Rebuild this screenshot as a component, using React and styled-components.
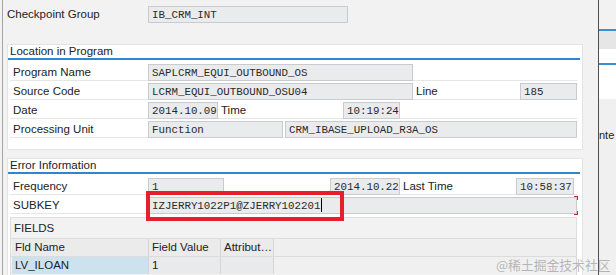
import React from 'react';
import styled, { createGlobalStyle } from 'styled-components';

// global page reset
const GlobalStyle = createGlobalStyle`
  html, body {
    margin: 0;
    padding: 0;
    background: #f2f2f2;
  }
  body {
    font-family: "Liberation Sans", Arial, sans-serif;
    font-size: 11.5px;
    color: #222;
  }
`;

const Screen = styled.div`
  position: relative;
  display: flex;
  width: 616px;
  height: 275px;
  overflow: hidden;
`;

const Main = styled.div`
  width: 598px;
  padding: 6px 0 0 7px;
  box-sizing: border-box;
  background: linear-gradient(to right, #f2f2f2 2px, #a4a4a4 2px, #a4a4a4 3px, #f2f2f2 3px);
`;

const Divider = styled.div`
  width: 1px;
  background: #4f4f4f;
`;

const Side = styled.div`
  flex: 1;
  display: flex;
  flex-direction: column;
  overflow: hidden;
  background: #f2f2f2;
`;

const SideBand = styled.div`
  height: ${p => p.h}px;
  background: ${p => p.bg};
  border-top: ${p => (p.blue ? '2px solid #3b8fd3' : 'none')};
`;

const SideText = styled.div`
  flex: 1;
  background: #f0f0f0;
  padding-top: 30px;
  font-size: 11px;
  white-space: nowrap;
`;

const TopRow = styled.div`
  display: flex;
  align-items: center;
  height: 17px;
  margin-bottom: 21px;
`;

const Group = styled.div`
  width: 576px;
  box-sizing: border-box;
  background: #fff;
  border: 1px solid #e4e4e4;
  padding: 0 5px ${p => p.pb || 11}px 2px;
  margin-bottom: 8px;
`;

const GroupTitle = styled.div`
  height: 13px;
  line-height: 13px;
  padding-left: 2px;
  margin-left: -2px;
  margin-right: -3px;
  border-bottom: 2px solid #2f86cf;
`;

const Rows = styled.div`
  padding-top: 2px;
`;

const Row = styled.div`
  display: flex;
  align-items: flex-start;
  height: 19px;
  padding-top: 2px;
  box-sizing: border-box;
  border-bottom: 1px solid #e6e6e6;
  position: relative;
`;

const Label = styled.div`
  width: ${p => p.w}px;
  flex: none;
  height: 17px;
  line-height: 17px;
  padding-left: ${p => (p.pl !== undefined ? p.pl : 3)}px;
  box-sizing: border-box;
  white-space: nowrap;
`;

const Field = styled.div`
  position: relative;
  width: ${p => (p.w ? `${p.w}px` : 'auto')};
  flex: ${p => (p.w ? 'none' : 1)};
  height: 17px;
  line-height: 16px;
  box-sizing: border-box;
  padding-left: 3px;
  margin-left: ${p => p.ml || 0}px;
  background: #e9ebed;
  border: 1px solid #c9cbce;
  font-family: "Liberation Mono", "Courier New", monospace;
  font-size: 10.8px;
  color: #2a2a2a;
  white-space: nowrap;
`;

const Caret = styled.span`
  display: inline-block;
  width: 1px;
  height: 14px;
  background: #000;
  vertical-align: -3px;
  margin-left: 1px;
`;

// red focus brackets at the end of the active input
const FocusMark = styled.div`
  position: absolute;
  right: -2px;
  width: 3px;
  height: 3px;
  ${p => (p.bottom ? 'bottom: -2px;' : 'top: -2px;')}
  border-right: 1px solid #d0222a;
  ${p => (p.bottom ? 'border-bottom: 1px solid #d0222a;' : 'border-top: 1px solid #d0222a;')}
`;

const Highlight = styled.div`
  position: absolute;
  left: -3px;
  top: -7px;
  width: 198px;
  height: 30px;
  box-sizing: border-box;
  border: 4px solid #e5202b;
  pointer-events: none;
`;

const Table = styled.div`
  margin-top: 3px;
  height: 70px;
  background: #f2f2f2;
  border: 1px solid #dedede;
  border-bottom: none;
`;

const TableTitle = styled.div`
  height: 20px;
  line-height: 20px;
  padding-left: 3px;
`;

const TableRow = styled.div`
  display: flex;
  height: 17px;
  border-top: 1px solid #dcdcdc;
  padding-left: 1px;
`;

const Cell = styled.div`
  width: ${p => p.w}px;
  flex: none;
  height: 17px;
  line-height: 17px;
  padding-left: 3px;
  box-sizing: border-box;
  border-right: 1px solid #d6d6d6;
  background: ${p => p.bg || '#ebebeb'};
  white-space: nowrap;
  overflow: hidden;
  text-overflow: ellipsis;
`;

const Watermark = styled.div`
  position: absolute;
  left: 496px;
  top: 255px;
  font-family: "Noto Sans CJK SC", sans-serif;
  font-size: 12.8px;
  color: rgba(140, 140, 140, 0.6);
  white-space: nowrap;
  pointer-events: none;
`;

export default function App() {
  return (
    <Screen>
      <GlobalStyle />
      <Main>
        <TopRow>
          <Label w={141} pl={0}>Checkpoint Group</Label>
          <Field w={200}>IB_CRM_INT</Field>
        </TopRow>

        <Group>
          <GroupTitle>Location in Program</GroupTitle>
          <Rows>
            <Row>
              <Label w={138}>Program Name</Label>
              <Field w={265}>SAPLCRM_EQUI_OUTBOUND_OS</Field>
            </Row>
            <Row>
              <Label w={138}>Source Code</Label>
              <Field w={265}>LCRM_EQUI_OUTBOUND_OSU04</Field>
              <Label w={107}>Line</Label>
              <Field w={57}>185</Field>
            </Row>
            <Row>
              <Label w={138}>Date</Label>
              <Field w={70}>2014.10.09</Field>
              <Label w={125}>Time</Label>
              <Field w={57}>10:19:24</Field>
            </Row>
            <Row>
              <Label w={138}>Processing Unit</Label>
              <Field w={135}>Function</Field>
              <Field ml={2}>CRM_IBASE_UPLOAD_R3A_OS</Field>
            </Row>
          </Rows>
        </Group>

        <Group pb={0}>
          <GroupTitle>Error Information</GroupTitle>
          <Rows>
            <Row>
              <Label w={138}>Frequency</Label>
              <Field w={76}>1</Field>
              <Field w={70} ml={106}>2014.10.22</Field>
              <Label w={116}>Last Time</Label>
              <Field w={58}>10:58:37</Field>
            </Row>
            <Row>
              <Label w={138}>SUBKEY</Label>
              <Field>
                IZJERRY1022P1@ZJERRY102201<Caret />
                <FocusMark />
                <FocusMark bottom />
                <Highlight />
              </Field>
            </Row>
          </Rows>
          <Table>
            <TableTitle>FIELDS</TableTitle>
            <TableRow>
              <Cell w={137}>Fld Name</Cell>
              <Cell w={72}>Field Value</Cell>
              <Cell w={53}>Attribut…</Cell>
              <Cell w={303} bg="#efefef" />
            </TableRow>
            <TableRow>
              <Cell w={137} bg="#cce2ef">LV_ILOAN</Cell>
              <Cell w={72} bg="#e8eaec">1</Cell>
              <Cell w={53} bg="#e8eaec" />
              <Cell w={303} bg="#f0f0f0" />
            </TableRow>
          </Table>
        </Group>
      </Main>
      <Divider />
      <Side>
        <SideBand h={29} bg="#f2f2f2" />
        <SideBand h={18} bg="#e6e6e6" blue />
        <SideBand h={14} bg="#ffffff" />
        <SideBand h={34} bg="#ffffff" blue />
        <SideText>nte</SideText>
      </Side>
      <Watermark>@稀土掘金技术社区</Watermark>
    </Screen>
  );
}
